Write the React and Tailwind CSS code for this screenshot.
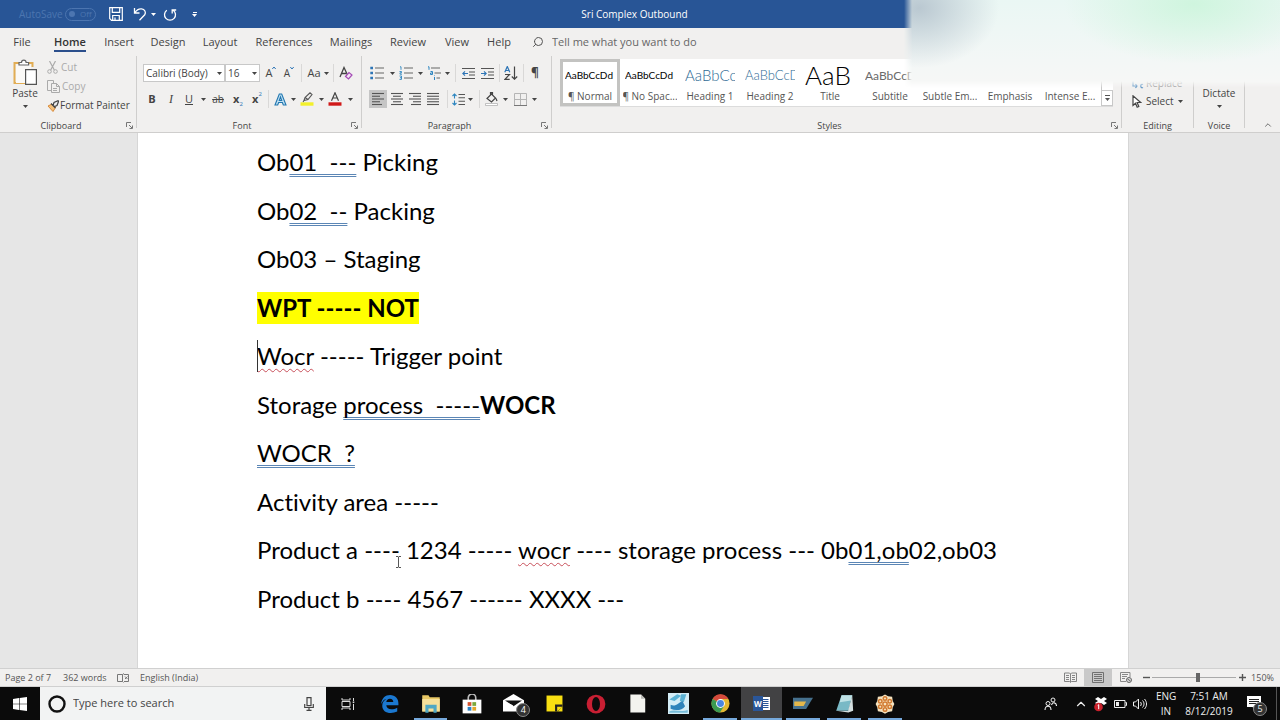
import { useState } from "react";
import { ChevronUp, Search } from "lucide-react";

const TABS = [
  { name: "File", w: "w-[44px]" },
  { name: "Home", w: "w-[52px]" },
  { name: "Insert", w: "w-[46px]" },
  { name: "Design", w: "w-[52px]" },
  { name: "Layout", w: "w-[52px]" },
  { name: "References", w: "w-[76px]" },
  { name: "Mailings", w: "w-[58px]" },
  { name: "Review", w: "w-[56px]" },
  { name: "View", w: "w-[42px]" },
  { name: "Help", w: "w-[42px]" },
];

const STYLES = [
  { name: "¶ Normal", sample: "AaBbCcDd", cls: "text-[10px] text-black" },
  { name: "¶ No Spac...", sample: "AaBbCcDd", cls: "text-[10px] text-black" },
  { name: "Heading 1", sample: "AaBbCc", cls: "text-[15px] font-light text-[#2e6a94]" },
  { name: "Heading 2", sample: "AaBbCcD", cls: "text-[13px] font-light text-[#2e6a94]" },
  { name: "Title", sample: "AaB", cls: "text-[26px] font-light text-black" },
  { name: "Subtitle", sample: "AaBbCcD", cls: "text-[12px] text-[#6a6a6a]" },
  { name: "Subtle Em...", sample: "AaBbCcDd", cls: "text-[10px] italic text-[#555]" },
  { name: "Emphasis", sample: "AaBbCcDd", cls: "text-[10px] italic text-black" },
  { name: "Intense E...", sample: "AaBbCcDd", cls: "text-[10px] italic text-[#2e6a94]" },
];

function Svg({ className = "w-4 h-4", box = "0 0 16 16", children }) {
  return (
    <svg className={`${className} shrink-0`} viewBox={box} fill="none" stroke="currentColor" aria-hidden="true">
      {children}
    </svg>
  );
}

function Caret() {
  return (
    <Svg className="w-[5px] h-[3px]" box="0 0 5 3">
      <path d="M0 0h5L2.5 3z" fill="currentColor" stroke="none" />
    </Svg>
  );
}

function Tool({ w, label, active, children }) {
  return (
    <button aria-label={label} className={`${w} h-[18px] shrink-0 flex items-center justify-center ${active ? "bg-[#c5c5c5]" : ""}`}>
      {children}
    </button>
  );
}

function Sep({ w }) {
  return <div className={`${w} h-[18px] shrink-0 flex justify-center`}><div className="w-px h-full bg-[#d9d8d7]" /></div>;
}

function Lines({ rows }) {
  return (
    <Svg className="w-[14px] h-[14px]" box="0 0 14 14">
      {rows.map(([x1, x2], i) => <path key={i} d={`M${x1} ${1.5 + i * 2.75}H${x2}`} stroke="#555" strokeWidth="1.1" />)}
    </Svg>
  );
}

function Launcher() {
  return (
    <button aria-label="More options" className="absolute right-[2px] bottom-0 w-[8px] h-[14px] flex items-center">
      <Svg className="w-[7px] h-[7px]" box="0 0 7 7"><path d="M.5 5V.5H5M3 3l3 3M6.5 3.500v3H3.500" stroke="#777" /></Svg>
    </button>
  );
}

function Group({ name, w, launcher, children }) {
  return (
    <section className={`${w} relative flex flex-col border-r border-[#cfcecd] mb-1`} aria-label={name}>
      <div className="flex-1">{children}</div>
      <div className={`relative h-[14px] -mb-1 text-[9px] leading-[16px] text-center text-[#444] ${launcher ? "pr-[14px]" : ""}`}>
        {name}
        {launcher && <Launcher />}
      </div>
    </section>
  );
}

function TitleBar() {
  return (
    <header className="h-[28px] shrink-0 flex items-center bg-[#285596] text-white">
      <div className="flex-1 flex items-center pl-[19px]">
        <span className="w-[46px] text-[10px] text-[#4c75b0]">AutoSave</span>
        <button aria-label="AutoSave off" className="w-[31px] h-[13px] rounded-full border border-[#4c75b0] flex items-center gap-[5px] px-[3px] text-[8px] leading-none text-[#4c75b0]">
          <span className="w-[6px] h-[6px] rounded-full bg-[#4c75b0]" />Off
        </button>
        <button aria-label="Save" className="ml-[13px] w-[14px]">
          <Svg className="w-[14px] h-[14px]" box="0 0 14 14">
            <path d="M.7.7h12.600v12.600H2.500L.7 11.500zM3.300.7v4.600h7.400V.7M3.700 13V8.500h6.600V13M6 13v-2.500" strokeWidth="1.200" />
          </Svg>
        </button>
        <button aria-label="Undo" className="ml-[10px] w-[14px]">
          <Svg className="w-[14px] h-[14px]" box="0 0 14 14">
            <path d="M1.500 1v5h5M1.800 5.800C3.500 3 6 1.600 8.500 1.800c3.300.3 4.800 3.400 3.200 6L6.500 13.200" strokeWidth="1.300" />
          </Svg>
        </button>
        <button aria-label="Undo list" className="w-[12px] flex justify-center"><Caret /></button>
        <button aria-label="Repeat" className="ml-[3px] w-[16px] flex justify-center">
          <Svg className="w-[14px] h-[14px]" box="0 0 14 14">
            <path d="M3.800 3.200a5.500 5.500 0 1 0 6.400 0M.8 3h4v3.600" strokeWidth="1.300" className="origin-center -scale-x-100" />
          </Svg>
        </button>
        <button aria-label="Customize Quick Access Toolbar" className="ml-[14px] flex flex-col items-center gap-px">
          <span className="w-[4px] h-px bg-white" /><Caret />
        </button>
      </div>
      <h1 className="text-[10px]">Sri Complex Outbound</h1>
      <div className="flex-1 pr-[30px]" />
    </header>
  );
}

function TabRow({ tab, setTab }) {
  return (
    <nav className="h-[28px] shrink-0 flex items-center text-[11px] text-[#444]">
      {TABS.map((t) => (
        <button key={t.name} onClick={() => setTab(t.name)} className={`${t.w} h-full flex justify-center`}>
          <span className={`h-[24px] leading-[27px] ${tab === t.name ? "font-semibold text-[#333] border-b-2 border-[#2b4f8c]" : ""}`}>{t.name}</span>
        </button>
      ))}
      <label className="ml-[12px] flex items-center gap-[8px]">
        <Search className="w-3 h-3 -scale-x-100 text-[#555]" strokeWidth={2} />
        <input aria-label="Tell me what you want to do" placeholder="Tell me what you want to do" className="w-[200px] bg-transparent outline-none placeholder:text-[#666]" />
      </label>
    </nav>
  );
}

function ClipboardGroup() {
  return (
    <Group name="Clipboard" w="w-[137px]" launcher>
      <div className="flex pl-[11px] gap-[8px] text-[10px] text-[#444]">
        <button className="w-[28px] flex flex-col items-center pt-[3px]">
          <Svg className="w-[24px] h-[26px]" box="0 0 24 26">
            <path d="M6 4H1.500v20H12M15 4h4.500v4" stroke="#e2ad54" strokeWidth="2" />
            <path d="M3 5.500h15V24H3z" fill="#faf9f7" stroke="none" />
            <path d="M6 6V3.500h2.500a2.300 2.300 0 0 1 4.600 0h2.500V6z" fill="#fff" stroke="#666" strokeWidth="1.200" />
            <path d="M12.600 10.600h10.800v14.800H12.600z" fill="#fff" stroke="#555" strokeWidth="1.200" />
          </Svg>
          <span className="mt-[1px] leading-[14px]">Paste</span>
          <span className="mt-[5px]"><Caret /></span>
        </button>
        <div className="flex flex-col pt-[2px]">
          <button className="h-[19px] flex items-center gap-[3px] text-[#aaa]">
            <Svg className="w-[11px] h-[13px]" box="0 0 11 13">
              <path d="M2.500 0l4.800 9M8.500 0L3.700 9" strokeWidth="1.200" /><circle cx="2.500" cy="10.500" r="1.800" /><circle cx="8.500" cy="10.500" r="1.800" />
            </Svg>
            Cut
          </button>
          <button className="h-[19px] flex items-center gap-[2px] text-[#aaa]">
            <Svg className="w-[13px] h-[13px]" box="0 0 13 13">
              <path d="M4 10.500H.500V.5h6V3M4.500 3.500h5l3 3v6h-8zM9.500 3.500v3h3M6 8.500h4M6 10.500h4" />
            </Svg>
            Copy
          </button>
          <button className="h-[19px] flex items-center gap-[1px] whitespace-nowrap">
            <Svg className="w-[12px] h-[12px]" box="0 0 12 12">
              <path d="M1 6l4-2 3.500 3.500L6 11.500z" fill="#f4c07a" stroke="#d98b3a" />
              <path d="M4 3.500l4.500 4.500M6 5.500l1-3 4-1.800.6.600L10 5.500l-2.500 1z" stroke="#444" strokeWidth="1.200" fill="#eee" />
            </Svg>
            Format Painter
          </button>
        </div>
      </div>
    </Group>
  );
}

function FontGroup() {
  return (
    <Group name="Font" w="w-[225px]" launcher>
      <div className="flex flex-col gap-[8px] pt-[8px] pl-[6px] text-[#444]">
        <div className="flex items-center">
          <div className="relative w-[82px] h-[18px]">
            <select aria-label="Font" className="block appearance-none w-full h-[18px] pl-[2px] pr-[12px] bg-white border border-[#c8c8c8] text-[10px]"><option>Calibri (Body)</option></select>
            <span className="absolute right-[3px] top-0 h-full flex items-center pointer-events-none"><Caret /></span>
          </div>
          <div className="relative w-[35px] h-[18px]">
            <select aria-label="Font size" className="block appearance-none w-full h-[18px] pl-[2px] bg-white border border-[#c8c8c8] text-[10px]"><option>16</option></select>
            <span className="absolute right-[3px] top-0 h-full flex items-center pointer-events-none"><Caret /></span>
          </div>
          <Tool w="w-[22px]" label="Grow font"><span className="text-[11px]">A</span><Svg className="w-[4px] h-[8px] self-start" box="0 0 4 8"><path d="M.3 5L2 3l1.700 2" stroke="#2e75b6" /></Svg></Tool>
          <Tool w="w-[14px]" label="Shrink font"><span className="text-[10px]">A</span><Svg className="w-[4px] h-[8px] self-start" box="0 0 4 8"><path d="M.3 3L2 5l1.700-2" stroke="#2e75b6" /></Svg></Tool>
          <Sep w="w-[10px]" />
          <Tool w="w-[16px]" label="Change case"><span className="text-[11px]">Aa</span></Tool>
          <Tool w="w-[8px]" label="Case list"><Caret /></Tool>
          <Sep w="w-[6px]" />
          <Tool w="w-[20px]" label="Clear formatting">
            <Svg className="w-[14px] h-[14px]" box="0 0 14 14">
              <path d="M1 11L5 1.500 9 10M2.500 7.500h4.500" strokeWidth="1.300" /><path d="M6.500 10.500l3.500-4 3 2.500-3.500 4z" fill="#f3e3f5" stroke="#a44bb5" strokeWidth="1.200" />
            </Svg>
          </Tool>
        </div>
        <div className="flex items-center text-[11px]">
          <Tool w="w-[18px]" label="Bold"><b>B</b></Tool>
          <Tool w="w-[20px]" label="Italic"><i className="font-['Liberation_Serif',serif] text-[12px]">I</i></Tool>
          <Tool w="w-[16px]" label="Underline"><u>U</u></Tool>
          <Tool w="w-[12px]" label="Underline styles"><Caret /></Tool>
          <Tool w="w-[18px]" label="Strikethrough"><s className="text-[10px]">ab</s></Tool>
          <Tool w="w-[22px]" label="Subscript"><b>x</b><span className="self-end text-[6px] leading-[8px] text-[#2e75b6]">2</span></Tool>
          <Tool w="w-[16px]" label="Superscript"><b>x</b><span className="self-start text-[6px] leading-[8px] text-[#2e75b6]">2</span></Tool>
          <Sep w="w-[6px]" />
          <Tool w="w-[18px]" label="Text effects">
            <Svg className="w-[13px] h-[13px]" box="0 0 13 13">
              <path d="M1 12L5.300 1h2.400L12 12H9.300l-.9-2.500H4.600L3.700 12zM5.300 7.500h2.400L6.500 4z" fill="#bfe0f2" stroke="#2277b0" strokeWidth="1.100" />
            </Svg>
          </Tool>
          <Tool w="w-[8px]" label="Effect list"><Caret /></Tool>
          <Tool w="w-[20px]" label="Highlight">
            <Svg className="w-[14px] h-[14px]" box="0 0 14 14">
              <path d="M.5 10.300h13v3.400H.5z" fill="#f3f02a" stroke="none" /><path d="M4 8.500l1-3L10 .8 12 2.500 8 7.500zM4 8.500L3 10M5 5.500l3 2" stroke="#555" strokeWidth="1.100" />
            </Svg>
          </Tool>
          <Tool w="w-[8px]" label="Highlight list"><Caret /></Tool>
          <Tool w="w-[20px]" label="Font color">
            <Svg className="w-[14px] h-[14px]" box="0 0 14 14">
              <path d="M.5 10.300h13v3.400H.5z" fill="#d01818" stroke="none" /><path d="M3.500 8.800L7 .8l3.500 8M4.700 6h4.600" strokeWidth="1.200" />
            </Svg>
          </Tool>
          <Tool w="w-[10px]" label="Color list"><Caret /></Tool>
        </div>
      </div>
    </Group>
  );
}

function ParagraphGroup() {
  return (
    <Group name="Paragraph" w="w-[190px]" launcher>
      <div className="flex flex-col gap-[8px] pt-[8px] pl-[5px] text-[#444]">
        <div className="flex items-center">
          <Tool w="w-[20px]" label="Bullets">
            <Svg className="w-[14px] h-[14px]" box="0 0 14 14"><path d="M.3 2h2.700M.3 7h2.700M.3 12h2.700" stroke="#2e75b6" strokeWidth="2.700" /><path d="M5 2h9M5 7h9M5 12h9" stroke="#666" strokeWidth="1.200" /></Svg>
          </Tool>
          <Tool w="w-[10px]" label="Bullet list"><Caret /></Tool>
          <Tool w="w-[18px]" label="Numbering">
            <Svg className="w-[14px] h-[14px]" box="0 0 14 14"><path d="M1 .8h1v3M.5 5.500h2v1.300h-1.500v1.400H3M.5 10h2v3.400H.5M1 11.700h1.500" stroke="#2e86c0" strokeWidth=".9" /><path d="M5 2h9M5 7h9M5 12h9" stroke="#666" strokeWidth="1.200" /></Svg>
          </Tool>
          <Tool w="w-[10px]" label="Number list"><Caret /></Tool>
          <Tool w="w-[18px]" label="Multilevel list">
            <Svg className="w-[14px] h-[14px]" box="0 0 14 14"><path d="M1 .8h1v3M3.500 5.500h2v3h-2V7h2M7.500 11v3M7.500 9.500v.6" stroke="#2e86c0" strokeWidth="1" /><path d="M4 2h9M7.500 7H14M9.500 12H13" stroke="#666" strokeWidth="1.200" /></Svg>
          </Tool>
          <Tool w="w-[8px]" label="Multilevel options"><Caret /></Tool>
          <Sep w="w-[8px]" />
          <Tool w="w-[18px]" label="Decrease indent">
            <Svg className="w-[13px] h-[13px]" box="0 0 13 13"><path d="M0 1.500h13M7 5h6M7 8h6M0 11.500h13" stroke="#555" strokeWidth="1.100" /><path d="M6 6.500H1M3 4.300L.8 6.500 3 8.700" stroke="#2e75b6" strokeWidth="1.100" /></Svg>
          </Tool>
          <Tool w="w-[20px]" label="Increase indent">
            <Svg className="w-[13px] h-[13px]" box="0 0 13 13"><path d="M0 1.500h13M7 5h6M7 8h6M0 11.500h13" stroke="#555" strokeWidth="1.100" /><path d="M0 6.500h5M3 4.300l2.200 2.200L3 8.700" stroke="#2e75b6" strokeWidth="1.100" /></Svg>
          </Tool>
          <Sep w="w-[4px]" />
          <Tool w="w-[20px]" label="Sort">
            <Svg className="w-[14px] h-[14px]" box="0 0 14 14"><path d="M.8 6.300L3.300.5l2.500 5.800M1.700 4.500h3.200" stroke="#2e75b6" strokeWidth="1.200" /><path d="M1 8.500h4.500L1 13.300h4.700M10.500.5v12.500M7.800 10.500l2.700 2.700 2.700-2.700" stroke="#444" strokeWidth="1.200" /></Svg>
          </Tool>
          <Sep w="w-[4px]" />
          <Tool w="w-[20px]" label="Show marks"><b className="text-[12px]">¶</b></Tool>
        </div>
        <div className="flex items-center pl-[2px]">
          <Tool w="w-[18px]" label="Align left" active><Lines rows={[[1, 13], [1, 9], [1, 13], [1, 9], [1, 11]]} /></Tool>
          <Tool w="w-[20px]" label="Center"><Lines rows={[[1, 13], [3, 11], [1, 13], [3, 11], [1, 13]]} /></Tool>
          <Tool w="w-[16px]" label="Align right"><Lines rows={[[1, 13], [5, 13], [1, 13], [5, 13], [3, 13]]} /></Tool>
          <Tool w="w-[20px]" label="Justify"><Lines rows={[[1, 13], [1, 13], [1, 13], [1, 13], [1, 13]]} /></Tool>
          <Sep w="w-[8px]" />
          <Tool w="w-[14px]" label="Line spacing">
            <Svg className="w-[13px] h-[13px]" box="0 0 13 13"><path d="M2.500 1v4.500M.5 3l2-2 2 2M2.500 12V7.500M.5 10l2 2 2-2" stroke="#2e86c0" strokeWidth="1.100" /><path d="M6.500 1.500H13M6.500 4.800H13M6.500 8.200H13M6.500 11.500H13" stroke="#555" strokeWidth="1.100" /></Svg>
          </Tool>
          <Tool w="w-[10px]" label="Spacing list"><Caret /></Tool>
          <Sep w="w-[8px]" />
          <Tool w="w-[16px]" label="Shading">
            <Svg className="w-[13px] h-[14px]" box="0 0 13 14"><path d="M2 6.500L6.500 2l4 4L6.500 10zM5.500 3V.7h2V3M11 6.500l1 2.500" stroke="#444" strokeWidth="1.200" /><path d="M.5 11.500h12v2H.5z" fill="#fff" stroke="#aaa" strokeWidth=".7" /></Svg>
          </Tool>
          <Tool w="w-[12px]" label="Shading list"><Caret /></Tool>
          <Tool w="w-[18px]" label="Borders">
            <Svg className="w-[13px] h-[13px]" box="0 0 13 13"><path d="M.5.5h12v12H.5zM6.500.5v12M.5 6.500h12" stroke="#b5b5b5" /><path d="M0 12.500h13" stroke="#777" /></Svg>
          </Tool>
          <Tool w="w-[10px]" label="Border list"><Caret /></Tool>
        </div>
      </div>
    </Group>
  );
}

function StylesGroup() {
  return (
    <Group name="Styles" w="flex-1 min-w-0" launcher>
      <div className="mt-[3px] ml-[8px] mr-[8px] h-[48px] flex bg-white border-b border-[#dcdcdc] overflow-hidden">
        {STYLES.map((s, i) => (
          <button key={s.name} className={`w-[60px] shrink-0 flex flex-col items-center overflow-hidden border-[3px] ${i === 0 ? "border-[#c3c3c1]" : "border-transparent"}`}>
            <span className={`w-[50px] h-[27px] leading-[27px] overflow-hidden whitespace-nowrap text-left font-['Lato',sans-serif] ${s.cls}`}>{s.sample}</span>
            <span className="text-[10px] leading-[14px] whitespace-nowrap text-[#555]">{s.name}</span>
          </button>
        ))}
        <div className="flex-1" />
        <div className="w-[12px] flex flex-col border-l border-[#c8c8c8] text-[#555]">
          <button aria-label="Scroll styles" className="flex-1" />
          <button aria-label="More styles" className="h-[16px] border border-l-0 border-[#c8c8c8] flex flex-col items-center justify-center gap-[2px]">
            <span className="w-[5px] h-px bg-[#555]" /><Caret />
          </button>
        </div>
      </div>
    </Group>
  );
}

function Ribbon() {
  return (
    <div className="h-[77px] shrink-0 flex border-b border-[#cfcecd]">
      <ClipboardGroup />
      <FontGroup />
      <ParagraphGroup />
      <StylesGroup />
      <Group name="Editing" w="w-[72px]">
        <div className="flex flex-col pt-[19px] pl-[10px] text-[10px] text-[#444]">
          <button className="h-[17px] flex items-center gap-[2px] text-[#999]">
            <Svg className="w-[12px] h-[12px]" box="0 0 12 12"><path d="M1 3v5h4M3.500 6L5 8 3.500 10M11 6.500c-3-1.500-3 4.500 0 3" stroke="#5a93c4" strokeWidth="1.200" /></Svg>
            Replace
          </button>
          <button className="h-[19px] flex items-center gap-[4px]">
            <Svg className="w-[10px] h-[13px]" box="0 0 10 13"><path d="M1 .8v9.700l2.500-2.300 1.700 4 1.600-.7-1.700-4h3.600z" fill="#fff" strokeWidth="1.200" /></Svg>
            Select <Caret />
          </button>
        </div>
      </Group>
      <Group name="Voice" w="w-[51px]">
        <button className="w-full pt-[30px] flex flex-col items-center gap-[5px] text-[10px] leading-[14px] text-[#444]">
          Dictate
          <Caret />
        </button>
      </Group>
      <div className="w-[35px] flex items-end justify-end pr-[7px] pb-[2px]">
        <button aria-label="Collapse ribbon"><ChevronUp className="w-[10px] h-[10px] text-[#555]" /></button>
      </div>
    </div>
  );
}

function Grammar({ children }) {
  return <span className="underline decoration-double decoration-1 decoration-[#5b86b5] underline-offset-[3px] [text-decoration-skip-ink:none]">{children}</span>;
}

function Spelling({ children }) {
  return <span className="underline decoration-wavy decoration-1 decoration-[#c8505a] underline-offset-[3px] [text-decoration-skip-ink:none]">{children}</span>;
}

function Document() {
  return (
    <main className="flex-1 min-h-0 flex bg-[#e6e6e6] pl-[137px] pr-[151px]">
      <article className="relative flex-1 flex flex-col justify-between overflow-hidden bg-white border-x border-[#d6d6d6] pt-[13px] pb-[53px] pl-[119px] whitespace-pre text-black font-['Lato',sans-serif] text-[24px] leading-[32px] [font-variant-ligatures:none]">
        <p>Ob<Grammar>01  ---</Grammar> Picking</p>
        <p>Ob<Grammar>02  --</Grammar> Packing</p>
        <p>Ob03 – Staging</p>
        <p><mark className="inline-block bg-[#ffff00] font-bold">WPT ----- NOT</mark></p>
        <p className="relative">
          <span className="absolute left-0 top-0 w-px h-full bg-[#333]" />
          <Spelling>Wocr</Spelling> ----- Trigger point
        </p>
        <p>Storage <Grammar>process  -----</Grammar><b>WOCR</b></p>
        <p><Grammar>WOCR  ?</Grammar></p>
        <p>Activity area -----</p>
        <p>Product a ---- 1234 ----- <Spelling>wocr</Spelling> ---- storage process --- 0b<Grammar>01,ob</Grammar>02,ob03</p>
        <p>Product b ---- 4567 ------ XXXX ---</p>
        <span className="absolute left-[258px] top-[423px]">
          <Svg className="w-[5px] h-[12px]" box="0 0 5 12"><path d="M0 .5h2l.5.500.5-.5h2M2.500 1v10M0 11.500h2l.5-.5.5.5h2" stroke="#444" strokeWidth=".9" /></Svg>
        </span>
      </article>
    </main>
  );
}

function StatusBar() {
  return (
    <footer className="h-[19px] shrink-0 flex items-center border-y border-[#d0d0d0] bg-[#f1f0ef] pl-[5px] pr-[6px] text-[9px] text-[#555]">
      <span className="w-[58px]">Page 2 of 7</span>
      <span className="w-[54px]">362 words</span>
      <span className="w-[23px]">
        <Svg className="w-[12px] h-[10px]" box="0 0 12 10"><path d="M5.500 1.500H.5v7h5zM5.500 1.500L7 .5M5.500 8.500l1 1M7 1.500h4.500v7H7M8 3.500l2.500 2.500M10.500 3.500L8 6" stroke="#777" /></Svg>
      </span>
      <span className="flex-1">English (India)</span>
      <button aria-label="Read mode" className="w-[28px] h-full flex items-center justify-center">
        <Svg className="w-[13px] h-[11px]" box="0 0 13 11"><path d="M.5 1h5l1 1 1-1h5v8.500h-5l-1 1-1-1h-5zM6.500 2v8M2 3.500h3M2 5.500h3M2 7.500h3M8 3.500h3M8 5.500h3M8 7.500h3" stroke="#777" strokeWidth=".9" /></Svg>
      </button>
      <button aria-label="Print layout" className="w-[28px] h-full flex items-center justify-center bg-[#c9c9c9]">
        <Svg className="w-[12px] h-[11px]" box="0 0 12 11"><path d="M.5.5h11v10H.5zM2 2.500h8M2 4.500h8M2 6.500h8M2 8.500h8" stroke="#666" strokeWidth=".9" /></Svg>
      </button>
      <button aria-label="Web layout" className="w-[28px] h-full flex items-center justify-center">
        <Svg className="w-[12px] h-[11px]" box="0 0 12 11"><path d="M6 9.500H.5v-9h9.500V5M2 2.500h6M2 4.500h5M2 6.500h3" stroke="#888" /><circle cx="9" cy="8" r="2.500" fill="#ddd" stroke="#666" /><path d="M7.500 7l3 2" stroke="#666" /></Svg>
      </button>
      <button aria-label="Zoom out" className="w-[12px] flex justify-center"><Svg className="w-[7px] h-[7px]" box="0 0 7 7"><path d="M0 3.500h7" stroke="#555" strokeWidth="1.400" /></Svg></button>
      <input
        type="range" aria-label="Zoom" min="10" max="290" defaultValue="165"
        className="w-[84px] h-[10px] appearance-none bg-transparent bg-[linear-gradient(#aaa,#aaa)] bg-[length:100%_1px] bg-center bg-no-repeat [&::-webkit-slider-thumb]:appearance-none [&::-webkit-slider-thumb]:w-[4px] [&::-webkit-slider-thumb]:h-[9px] [&::-webkit-slider-thumb]:bg-[#666]"
      />
      <button aria-label="Zoom in" className="w-[12px] flex justify-center"><Svg className="w-[7px] h-[7px]" box="0 0 7 7"><path d="M0 3.500h7M3.500 0v7" stroke="#555" strokeWidth="1.400" /></Svg></button>
      <span className="w-[26px] text-right">150%</span>
    </footer>
  );
}

const APPS = [
  {
    name: "Edge", size: "w-[19px] h-[19px]",
    icon: <path d="M1 8.500C1.300 3.500 4.500.8 8.500.8c4.500 0 7 3 7 7.200v1.500H5.300c.2 2.300 2 3.300 4.300 3.300 1.800 0 3.300-.5 4.900-1.300v3.300c-1.600.8-3.500 1.200-5.400 1.200-4.300 0-7.200-2.300-7.200-6.200 0-2.500 1.200-4.500 3.500-5.600-2 .4-3.400 1.800-4.400 4.300zM5.300 6.800h5.900c0-1.800-1-2.900-2.800-2.900S5.500 5.200 5.300 6.800z" fill="#1b78d0" stroke="none" />,
  },
  {
    name: "File Explorer", line: "w-[33px]", size: "w-[20px] h-[20px]",
    icon: <g stroke="none"><path d="M1 1h5l1 1.500h8V14H1z" fill="#e8c865" /><path d="M1 4h14v10H1z" fill="#f6e09a" /><path d="M3.500 15V8.500h9V15H10v-3.500H6V15z" fill="#4fa8c4" /></g>,
  },
  {
    name: "Store", size: "w-[20px] h-[20px]",
    icon: <g><path d="M5 5V3a3 3 0 0 1 6 0v2" stroke="#bbb" strokeWidth="1.300" /><path d="M.5 4.500h15v11H.5z" fill="#fff" stroke="none" /><g stroke="none"><path d="M4.500 6.500h3v3h-3z" fill="#d6532e" /><path d="M8.300 6.500h3v3h-3z" fill="#7ba93a" /><path d="M4.500 10.300h3v3h-3z" fill="#2b82c4" /><path d="M8.300 10.300h3v3h-3z" fill="#e4a82a" /></g></g>,
  },
  {
    name: "Mail", size: "w-[21px] h-[21px]", badge: "4",
    icon: <g stroke="none"><path d="M0 5.500L8 .8l8 4.700V14H0z" fill="#fff" /><path d="M1.500 5.800h13L8 10z" fill="#111" /><path d="M0 6l6.500 4L8 9.500" fill="#fff" /></g>,
  },
  {
    name: "Sticky Notes",
    icon: <g stroke="none"><path d="M.5.5h15v15H.5z" fill="#f8df12" /><path d="M8.500 9h7v1.500L11 15.500H8.500z" fill="#222" /><path d="M10.500 15.500v-4.500h5z" fill="#f8df12" /></g>,
  },
  {
    name: "Opera", size: "w-[20px] h-[20px]",
    icon: <g stroke="none"><ellipse cx="8" cy="8" rx="7.500" ry="7.500" fill="#c81f33" /><ellipse cx="8" cy="8" rx="3.200" ry="5.600" fill="#0b0b0b" /></g>,
  },
  {
    name: "Document", size: "w-[19px] h-[19px]",
    icon: <g stroke="none"><path d="M2 .5h9l3.500 3.500v11.500H2z" fill="#f4f4ef" /><path d="M11 .5V4h3.500z" fill="#b8b8b4" /></g>,
  },
  {
    name: "Snapshot", size: "w-[21px] h-[21px]",
    icon: <g stroke="none"><path d="M0 0h16v16H0z" fill="#d4edf6" /><path d="M1 5l6-4 3 1-5 4zM10 1h4l-2 6-3-1z" fill="#5bb2d4" /><path d="M2 9c4 2 6-2 9-3l2 4c-2 3-7 4-11 2z" fill="#2f84bb" /><path d="M1 14c4-2 9 1 14-1v2H1z" fill="#76bcd9" /></g>,
  },
  {
    name: "Chrome", line: "w-[34px]", size: "w-[19px] h-[19px]",
    icon: <g stroke="none"><circle cx="8" cy="8" r="7.600" fill="#e3b832" /><path d="M8 8L1.300 4.300A7.600 7.600 0 0 1 14.700 4.300H8z" fill="#d54a3c" /><path d="M8 8L1.300 4.300A7.600 7.600 0 0 0 7.500 15.600L11 10z" fill="#3b9a52" /><circle cx="8" cy="8" r="3.700" fill="#fff" /><circle cx="8" cy="8" r="2.900" fill="#4a86e0" /></g>,
  },
  { name: "Word", line: "w-full", active: true },
  {
    name: "SAP Logon", line: "w-[34px]", size: "w-[20px] h-[20px]",
    icon: <g stroke="none"><path d="M0 3h16l-5.500 9H0z" fill="#46718e" /><path d="M1 6h9.500L8.500 9.500H1z" fill="#e5b84b" /></g>,
  },
  {
    name: "Notepad", line: "w-[34px]", size: "w-[19px] h-[19px]",
    icon: <g stroke="none"><path d="M5.500 1h9l-3 13H1z" fill="#79b9c6" /><path d="M5.500 1h9l-1 4.500L4 7z" fill="#bfe2e6" /><path d="M14.500 1l.8 13-4 1.500L1 14l10 .3z" fill="#d4dfe0" /></g>,
  },
  {
    name: "GoToMeeting", line: "w-[34px]", size: "w-[20px] h-[20px]",
    icon: (
      <g>
        <path d="M8 .3l2.500 1.400 3.200.5.500 3.300L15.500 8l-1.300 2.500-.5 3.300-3.200.5L8 15.700l-2.500-1.400-3.200-.5-.5-3.300L.5 8l1.300-2.500.5-3.300 3.200-.5z" fill="#f5e3c0" stroke="none" />
        <g stroke="#d27a30" strokeWidth="1.200"><circle cx="8" cy="8" r="1.700" /><circle cx="8" cy="3.600" r="1.400" /><circle cx="8" cy="12.400" r="1.400" /><circle cx="4.200" cy="5.800" r="1.400" /><circle cx="11.800" cy="5.800" r="1.400" /><circle cx="4.200" cy="10.200" r="1.400" /><circle cx="11.800" cy="10.200" r="1.400" /></g>
      </g>
    ),
  },
];

function WordIcon() {
  return (
    <span className="flex items-center">
      <span className="w-[10px] h-[15px] bg-[#2a5699] text-white text-[8px] leading-[15px] font-bold text-center">W</span>
      <Svg className="w-[7px] h-[13px]" box="0 0 7 13"><path d="M0 0h7v13H0z" fill="#fff" stroke="none" /><path d="M0 2.500h5.500M0 4.500h5.500M0 6.500h5.500M0 8.500h5.500M0 10.500h5.500" stroke="#2a5699" /></Svg>
    </span>
  );
}

function Taskbar() {
  return (
    <div className="h-[33px] shrink-0 flex bg-[#0b0b0b] text-white">
      <button aria-label="Start" className="w-[40px] flex items-center justify-center">
        <Svg className="w-[14px] h-[14px]" box="0 0 14 14"><path d="M0 2l6-.9v5.600H0zM6.600 1L14 0v6.700H6.600zM0 7.300h6v5.600L0 12zM6.600 7.300H14V14l-7.400-1z" fill="#fff" stroke="none" /></Svg>
      </button>
      <label className="w-[286px] flex items-center bg-[#f2f3f3] pl-[7px] pr-[12px]">
        <Svg className="w-[20px] h-[20px]" box="0 0 20 20"><circle cx="10" cy="10" r="7.500" stroke="#111" strokeWidth="2.400" /></Svg>
        <input aria-label="Type here to search" placeholder="Type here to search" className="flex-1 min-w-0 ml-[6px] bg-transparent outline-none text-[11px] placeholder:text-[#444]" />
        <Svg className="w-[10px] h-[14px]" box="0 0 10 14"><path d="M3 .7h4v8H3zM.7 7v3.500h8.600V7M5 10.500v3M2.500 13.300h5" stroke="#444" strokeWidth="1.200" /></Svg>
      </label>
      <button aria-label="Task view" className="w-[43px] flex items-center justify-center">
        <Svg className="w-[14px] h-[14px]" box="0 0 14 14"><path d="M1 1v2h8V1M1 4.500h8v5H1zM1 13v-2h8v2M12.500 1v3M12.500 7v6" stroke="#ddd" /><path d="M11.700 4.500h1.600v1.600h-1.600z" fill="#ddd" stroke="none" /></Svg>
      </button>
      <div className="w-[537px] flex">
        {APPS.map((a) => (
          <button key={a.name} aria-label={a.name} className={`relative flex-1 flex items-center justify-center ${a.active ? "bg-[#424244]" : ""}`}>
            {a.icon ? <Svg className={a.size || "w-[17px] h-[17px]"}>{a.icon}</Svg> : <WordIcon />}
            {a.badge && <span className="absolute right-[4px] bottom-[3px] w-[14px] h-[14px] rounded-full bg-[#333] border border-[#888] text-[9px] leading-[12px] text-center">{a.badge}</span>}
            {a.line && <span className={`absolute bottom-0 ${a.line} h-[2px] bg-[#76a9dc]`} />}
          </button>
        ))}
      </div>
      <div className="flex-1" />
      <div className="flex items-center text-[10px] leading-[15px] text-[#eee]">
        <Svg className="w-[13px] h-[14px] mr-[17px]" box="0 0 13 14"><circle cx="9" cy="3" r="2" /><circle cx="4" cy="6.500" r="2" /><path d="M1 13c0-5 6-5 6 0M7.500 8c1-3.500 5-2.500 5 1" strokeWidth="1.100" /></Svg>
        <ChevronUp className="w-[14px] h-[14px] mr-[6px]" strokeWidth={2} />
        <Svg className="w-[14px] h-[16px] mr-[6px]" box="0 0 14 16">
          <path d="M1 3l3-2 3 2 3-2 3 2-3 2 3 2-3 2-3-2-3 2-3-2 3-2z" fill="#fff" stroke="none" /><circle cx="4.500" cy="11" r="4.300" fill="#c9202b" stroke="none" /><path d="M3.700 9.500l1-.8v4.500" stroke="#fff" />
        </Svg>
        <Svg className="w-[13px] h-[10px] mr-[6px]" box="0 0 13 10"><path d="M.5 1.500h10.500v7H.5zM11.500 3.500h1v3h-1" /><path d="M2 3h3v4H2z" fill="#eee" stroke="none" /></Svg>
        <Svg className="w-[14px] h-[12px] mr-[9px]" box="0 0 14 12"><path d="M.5 4h2L5.500 1v10l-3-3h-2zM7.500 4c1 1.200 1 2.800 0 4M9.500 2.500c2 2 2 5 0 7M11.500 1c2.700 3 2.700 7 0 10" /></Svg>
        <div className="w-[20px] text-center">ENG<br />IN</div>
        <div className="w-[66px] text-center">7:51 AM<br />8/12/2019</div>
        <div className="relative w-[34px] pl-[5px]">
          <Svg className="w-[14px] h-[15px]" box="0 0 14 15"><path d="M0 0h14v11H9v3.500L5.500 11H0z" fill="#fff" stroke="none" /><path d="M2 3.500h10M2 5.500h10M2 7.500h7" stroke="#222" /></Svg>
          <span className="absolute left-[11px] top-[6px] w-[14px] h-[14px] rounded-full bg-[#333] border border-[#888] text-[9px] leading-[12px] text-center">5</span>
        </div>
      </div>
      <div className="w-[4px] border-l border-[#555]" />
    </div>
  );
}

export default function App() {
  const [tab, setTab] = useState("Home");

  return (
    <div className="relative h-screen flex flex-col overflow-hidden bg-[#f1f0ef] font-['Open_Sans','Noto_Sans',sans-serif]">
      <TitleBar />
      <TabRow tab={tab} setTab={setTab} />
      <Ribbon />
      <Document />
      <StatusBar />
      <Taskbar />
      {/* frosted panel floating over the window corner */}
      <div className="absolute right-0 top-0 w-[376px] h-[88px] pointer-events-none [mask-image:linear-gradient(to_right,transparent,black_8px),linear-gradient(to_bottom,black_81px,transparent)] [mask-composite:intersect] bg-[radial-gradient(ellipse_130px_60px_at_290px_4px,#cff5de,transparent),radial-gradient(ellipse_80px_60px_at_15px_8px,#bac8d1,transparent),linear-gradient(#eaf7f4,#f3f7f6_60px,#f7f7f6)]" />
    </div>
  );
}
